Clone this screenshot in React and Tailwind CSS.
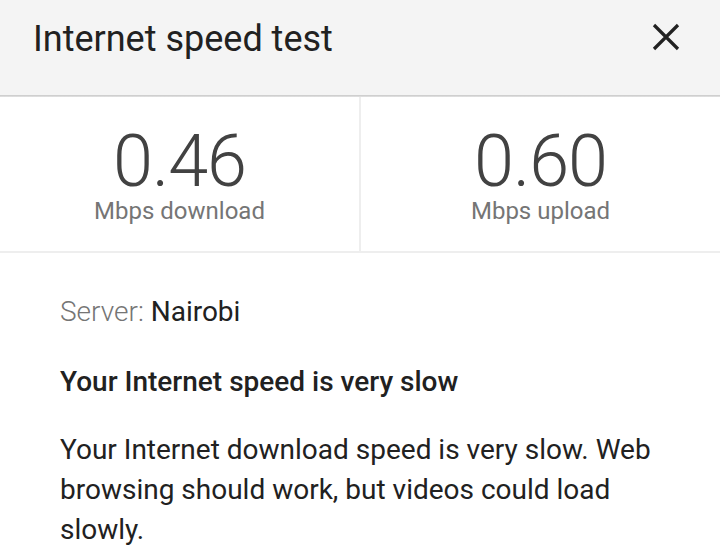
const Stat = ({ value, label, divider }) => (
  <div className={`flex-1 flex flex-col items-center pt-[30px] ${divider ? 'border-r-2 border-[#eeeeee]' : ''}`}>
    <div className="text-[72px] leading-[70px] font-light text-[#424242] tracking-[-1px]">{value}</div>
    <div className="text-[24px] leading-[28px] text-[#757575]">{label}</div>
  </div>
);

const App = () => {
  return (
    <div className="w-[720px] h-[548px] bg-white overflow-hidden font-['Roboto',sans-serif]">
      <div className="h-[95px] bg-[#f4f4f4] flex items-start justify-between pl-[33px] pr-[40px] pt-[18px]">
        <h1 className="text-[36px] leading-[42px] text-[#212121] font-normal">Internet speed test</h1>
        <button className="mt-[5px]">
          <svg width="28" height="28" viewBox="0 0 28 28">
            <path d="M2 2 L26 26 M26 2 L2 26" stroke="#212121" strokeWidth="3.2" />
          </svg>
        </button>
      </div>
      <div className="h-[2px] bg-gradient-to-b from-[#c8c8c8] to-[#e4e4e4]" />

      <div className="flex h-[156px] border-b-2 border-[#eeeeee]">
        <Stat value="0.46" label="Mbps download" divider />
        <Stat value="0.60" label="Mbps upload" />
      </div>

      <div className="pl-[60px] pr-[50px] pt-[43px]">
        <p className="text-[28px] leading-[32px]">
          <span className="text-[#757575] font-light">Server: </span>
          <span className="text-[#212121]">Nairobi</span>
        </p>
        <h2 className="mt-[38px] text-[28px] leading-[32px] font-medium text-[#212121]">
          Your Internet speed is very slow
        </h2>
        <p className="mt-[32px] text-[28px] leading-[40px] text-[#212121]">
          Your Internet download speed is very slow. Web browsing should work, but videos could load slowly.
        </p>
      </div>
    </div>
  );
};

export default App;
